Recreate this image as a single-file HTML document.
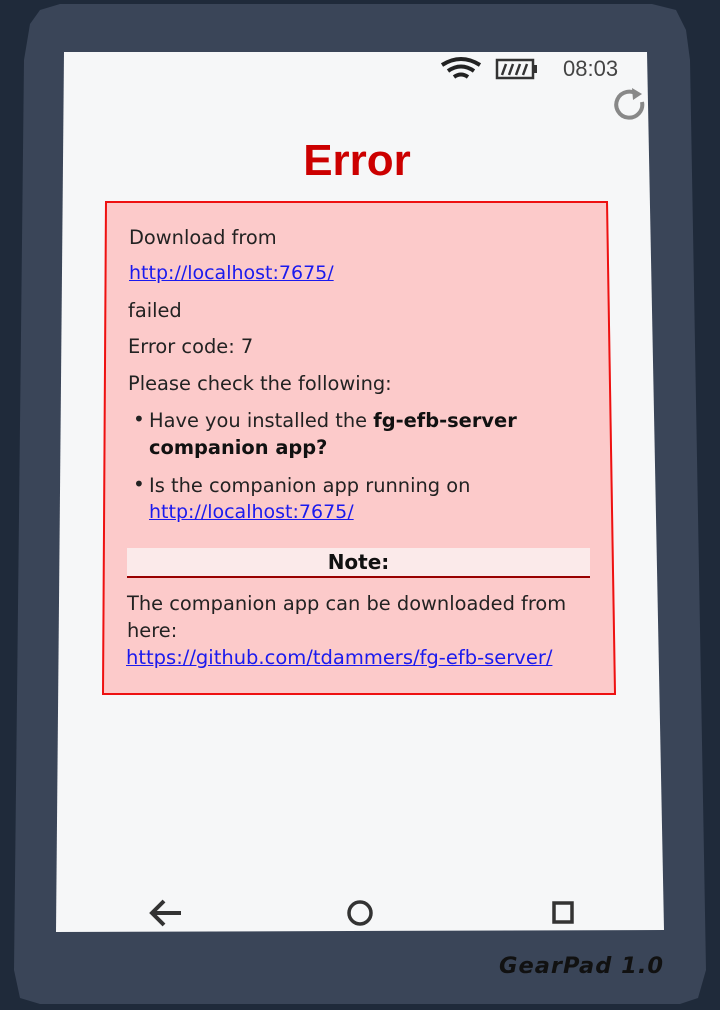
<!DOCTYPE html>
<html><head><meta charset="utf-8"><style>
*{margin:0;padding:0;box-sizing:border-box}
body{width:720px;height:1010px;overflow:hidden;background:#1f2a3a;position:relative;font-family:"DejaVu Sans","Liberation Sans",sans-serif}
.body{position:absolute;left:0;top:0;width:720px;height:1010px;background:#3a4558;clip-path:polygon(60px 4px,652px 4px,676px 10px,686px 30px,690px 60px,706px 970px,698px 998px,680px 1004px,40px 1004px,20px 998px,14px 970px,24px 60px,30px 24px,40px 10px)}
.screen{position:absolute;left:0;top:0;width:720px;height:1010px;background:#f6f7f8;clip-path:polygon(64px 52px,647px 52px,664px 930px,56px 932px)}
.t{position:absolute;font-size:19.4px;color:#222;white-space:nowrap;line-height:22px}
a{color:#1a1aee;text-decoration:underline}
b{font-weight:bold;color:#111}
</style></head><body>
<div class="body"></div>
<div class="screen"></div>
<svg style="position:absolute;left:440px;top:55px" width="100" height="30" viewBox="0 0 100 30">
<path d="M2 10 Q21 -2 40 10" stroke="#222" stroke-width="4" fill="none"/>
<path d="M8 16 Q21 7 34 16" stroke="#222" stroke-width="4" fill="none"/>
<path d="M14 22 Q21 17 28 22" stroke="#222" stroke-width="4" fill="none"/>
<rect x="57" y="5" width="36" height="18" fill="none" stroke="#333" stroke-width="2.5"/>
<rect x="93" y="10" width="4" height="8" fill="#333"/>
<path d="M62 20 L66 9 M69 20 L73 9 M76 20 L80 9 M83 20 L87 9" stroke="#333" stroke-width="2.5"/>
</svg>
<div class="t" style="left:563px;top:58px;font-family:'Liberation Sans',sans-serif;font-size:22px;color:#444">08:03</div>
<svg style="position:absolute;left:612px;top:86px" width="36" height="36" viewBox="0 0 36 36">
<path d="M26 9 A13 13 0 1 0 30 16" stroke="#888" stroke-width="4" fill="none"/>
<path d="M20 2 L30 8 L21 14 Z" fill="#888"/>
</svg>
<div class="t" style="left:0;width:714px;text-align:center;top:137px;font-family:'Liberation Sans',sans-serif;font-weight:bold;font-size:44px;line-height:48px;color:#cc0000">Error</div>
<div style="position:absolute;left:0;top:0;width:720px;height:1010px;background:#fccaca;clip-path:polygon(105px 201px,608px 201px,616px 695px,102px 695px)"></div>
<svg style="position:absolute;left:0;top:0" width="720" height="1010"><polygon points="106,202 607,202 615,694 103,694" fill="none" stroke="#ee1111" stroke-width="2"/></svg>
<div class="t" style="left:129px;top:227px">Download from</div>
<div class="t" style="left:129px;top:262px;font-size:19px"><a>http://localhost:7675/</a></div>
<div class="t" style="left:128px;top:300px">failed</div>
<div class="t" style="left:128px;top:336px">Error code: 7</div>
<div class="t" style="left:128px;top:373px">Please check the following:</div>
<div class="t" style="left:133px;top:408px;font-size:20px">•</div>
<div class="t" style="left:149px;top:410px">Have you installed the <b>fg-efb-server</b></div>
<div class="t" style="left:149px;top:437px"><b>companion app?</b></div>
<div class="t" style="left:133px;top:473px;font-size:20px">•</div>
<div class="t" style="left:149px;top:475px">Is the companion app running on</div>
<div class="t" style="left:149px;top:501px;font-size:19px"><a>http://localhost:7675/</a></div>
<div style="position:absolute;left:127px;top:548px;width:463px;height:30px;background:#fbeaea;border-bottom:2px solid #990000"></div>
<div class="t" style="left:127px;width:463px;text-align:center;top:551px;font-weight:bold;color:#111;font-size:20px">Note:</div>
<div class="t" style="left:127px;top:593px">The companion app can be downloaded from</div>
<div class="t" style="left:127px;top:620px">here:</div>
<div class="t" style="left:126px;top:647px;font-size:19.5px"><a>https://github.com/tdammers/fg-efb-server/</a></div>
<svg style="position:absolute;left:140px;top:895px" width="440" height="40" viewBox="0 0 440 40">
<path d="M12 18 H41 M24 6 L12 18 L24 30" stroke="#333" stroke-width="4" fill="none"/>
<ellipse cx="220" cy="18" rx="11" ry="11" stroke="#333" stroke-width="3.5" fill="none"/>
<rect x="414" y="8" width="18" height="19" stroke="#333" stroke-width="3.5" fill="none"/>
</svg>
<div class="t" style="left:499px;top:955px;font-size:22.5px;font-style:italic;font-weight:bold;color:#111;letter-spacing:1px">GearPad 1.0</div>
</body></html>
